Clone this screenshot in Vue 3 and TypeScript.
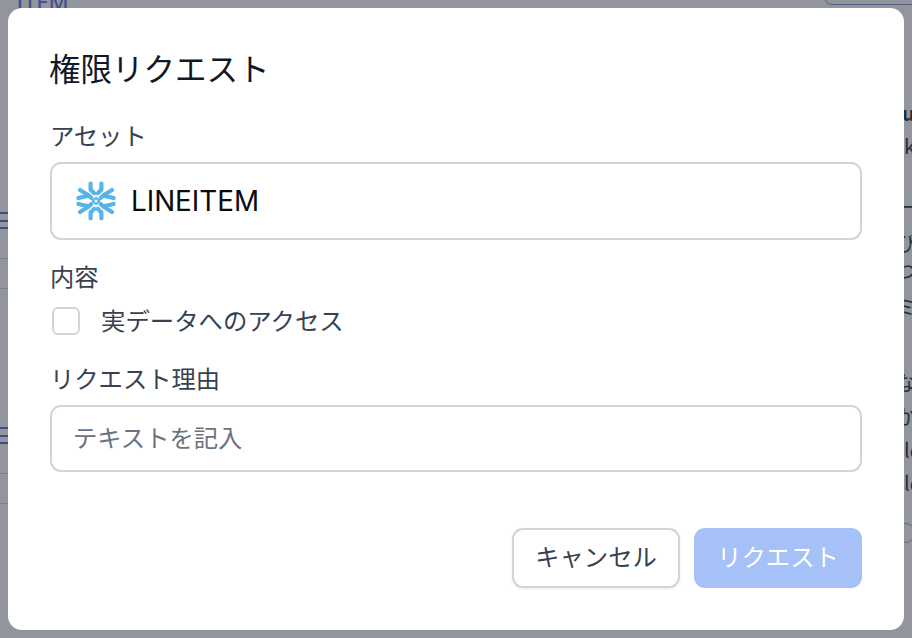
<script setup lang="ts">
const lineGroups = [1, 2]
const rightFragments = ['u', 'k', 'ー', 'び', 'つ', 'ミ', 'な', 'か', 'ld', 'ld', '○']
const mirrors = ['', 'translate(42 0) scale(-1 1)', 'translate(0 42) scale(1 -1)', 'translate(42 42) scale(-1 -1)']
</script>

<template>
  <div class="page">
    <div class="backdrop-content">
      <div class="top-text">ITEM</div>
      <div class="left-lines">
        <div v-for="g in lineGroups" :key="g" class="line-group">
          <i class="blue"></i><i class="blue"></i><i class="blue"></i>
          <i class="grey first"></i><i class="grey second"></i>
        </div>
      </div>
      <div class="top-pill"></div>
      <div class="right-text">
        <span v-for="(f, i) in rightFragments" :key="i" class="frag" :class="'f' + i">{{ f }}</span>
      </div>
    </div>
    <div class="scrim"></div>
    <section class="modal">
      <h2 class="title">権限リクエスト</h2>

      <label class="label asset-label">アセット</label>
      <div class="asset-box">
        <svg class="snow" viewBox="0 0 42 42" aria-hidden="true">
          <g fill="none" stroke="#56b4e9" stroke-width="4.2" stroke-linecap="round" stroke-linejoin="round">
            <g v-for="m in mirrors" :key="m" :transform="m">
              <path d="M15.6 3.6 V9.6 L19.2 13.2" />
              <path d="M5 10 L13.4 15.2 L16.4 18" />
              <path d="M3.4 18 L12.4 16" />
            </g>
          </g>
          <path d="M21 17.8 24.2 21 21 24.2 17.8 21Z" fill="#fff" stroke="#56b4e9" stroke-width="2" />
        </svg>
        <span class="asset-name">LINEITEM</span>
      </div>

      <label class="label content-label">内容</label>
      <div class="check-row">
        <span class="checkbox"></span>
        <span class="check-text">実データへのアクセス</span>
      </div>

      <label class="label reason-label">リクエスト理由</label>
      <div class="input"><span class="placeholder">テキストを記入</span></div>

      <div class="actions">
        <button class="btn cancel" type="button"><span class="btn-text">キャンセル</span></button>
        <button class="btn submit" type="button"><span class="btn-text">リクエスト</span></button>
      </div>
    </section>
  </div>
</template>

<style>
html, body { margin: 0; padding: 0; background: #91949f; }
</style>

<style scoped>
.page {
  position: relative;
  width: 912px;
  height: 638px;
  overflow: hidden;
  background: #fff;
  font-family: "Noto Sans CJK JP", "Noto Sans", sans-serif;
}
.backdrop-content { position: absolute; inset: 0; color: #1f2937; }
.top-text {
  position: absolute; left: 16px; top: -11px;
  font: 500 22px/24px "Noto Sans", sans-serif;
  color: #3b5bdb; opacity: .75;
}
.left-lines { position: absolute; left: 0; top: 0; width: 8px; height: 638px; }
.line-group { position: absolute; left: 0; width: 8px; height: 100px; }
.line-group:nth-child(1) { top: 212px; }
.line-group:nth-child(2) { top: 427px; }
.line-group i { display: block; position: absolute; left: 0; width: 8px; }
.line-group .blue { height: 2px; background: #5a78d6; }
.line-group .blue:nth-child(1) { top: 0; }
.line-group .blue:nth-child(2) { top: 8px; }
.line-group .blue:nth-child(3) { top: 15px; }
.line-group .grey { height: 1px; background: #d8dade; }
.line-group .first { top: 46px; }
.line-group .second { top: 76px; }
.top-pill {
  position: absolute; left: 824px; top: -30px; width: 100px; height: 33px;
  border: 1px solid #8f9fd0; border-radius: 8px;
}
.right-text { position: absolute; left: 904px; top: 0; width: 8px; height: 638px; overflow: hidden; color: #374151; font-size: 20px; line-height: 22px; }
.frag { position: absolute; left: -8px; }
.f0 { top: 102px; left: -2px; font-weight: 700; }
.f1 { top: 135px; left: 0; }
.f2 { top: 196px; }
.f3 { top: 232px; }
.f4 { top: 260px; }
.f5 { top: 296px; }
.f6 { top: 372px; }
.f7 { top: 406px; }
.f8 { top: 439px; left: 0; }
.f9 { top: 472px; left: 0; }
.f10 { top: 522px; color: #9ca3af; }

.scrim { position: absolute; inset: 0; background: rgba(17, 24, 39, 0.46); }

.modal {
  position: absolute;
  left: 8px;
  top: 8px;
  width: 896px;
  height: 622px;
  box-sizing: border-box;
  padding: 40px 42px 42px;
  background: #fff;
  border-radius: 14px;
  display: flex;
  flex-direction: column;
  color: #374151;
}
.title {
  margin: 0 0 34px -1px;
  font-size: 31.5px;
  line-height: 38px;
  font-weight: 400;
  color: #111827;
}
.label {
  display: block;
  font-size: 24.3px;
  line-height: 30px;
  color: #374151;
}
.asset-label { margin-bottom: 12px; }
.asset-box {
  display: flex;
  align-items: center;
  gap: 14px;
  height: 78px;
  box-sizing: border-box;
  padding-left: 23px;
  border: 2px solid #d1d5db;
  border-radius: 11px;
}
.snow { width: 42px; height: 42px; flex: none; }
.asset-name {
  font-family: "Inter", "Noto Sans", sans-serif;
  font-size: 27.8px;
  color: #0b0b0b;
}
.content-label { margin-top: 21px; }
.check-row { display: flex; align-items: center; gap: 20px; margin-top: 10px; height: 40px; padding-left: 2px; }
.checkbox {
  width: 24px; height: 24px; flex: none;
  border: 2px solid #d1d5db; border-radius: 6px; background: #fff;
}
.check-text { font-size: 24.4px; line-height: 32px; color: #374151; margin-left: 1px; margin-top: -2px; }
.reason-label { margin-top: 22px; }
.input {
  margin-top: 12px;
  height: 67px;
  box-sizing: border-box;
  padding-left: 21px;
  display: flex;
  align-items: center;
  border: 2px solid #d1d5db;
  border-radius: 11px;
  font-size: 24.3px;
  color: #6b7280;
}
.placeholder { margin-top: -4px; }
.actions { display: flex; justify-content: flex-end; gap: 14px; margin-top: 56px; }
.btn {
  height: 60px;
  box-sizing: border-box;
  border-radius: 11px;
  font-family: inherit;
  font-size: 24.3px;
  padding: 0;
}
.btn-text { display: block; margin-top: -5px; }
.cancel {
  width: 168px;
  background: #fff;
  border: 2px solid #d1d5db;
  color: #374151;
  box-shadow: 0 1px 3px rgba(0,0,0,.08);
}
.submit {
  width: 168px;
  background: #a6c1f7;
  border: none;
  color: #fff;
}
</style>
